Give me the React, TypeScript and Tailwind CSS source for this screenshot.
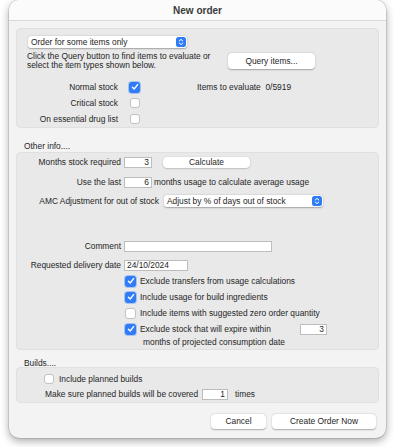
import React from "react";

const FONT = { fontFamily: '"Liberation Sans", Arial, sans-serif' };

function Stepper() {
  return (
    <svg width="10" height="10" viewBox="0 0 10 10" className="shrink-0">
      <rect x="0" y="0" width="10" height="10" rx="2.5" fill="#2f7cf6" />
      <path d="M3.2 4 L5 2.4 L6.8 4" stroke="#fff" strokeWidth="1" fill="none" strokeLinecap="round" strokeLinejoin="round" />
      <path d="M3.2 6 L5 7.6 L6.8 6" stroke="#fff" strokeWidth="1" fill="none" strokeLinecap="round" strokeLinejoin="round" />
    </svg>
  );
}

function Check({ on, size = 11 }: { on: boolean; size?: number }) {
  if (on) {
    return (
      <span
        className="flex shrink-0 items-center justify-center rounded-[3px] bg-[#2f7cf6] shadow-[0_0_0_1px_rgba(47,124,246,0.35)]"
        style={{ width: size, height: size }}
      >
        <svg width="8" height="8" viewBox="0 0 8 8">
          <path d="M1.4 4.2 L3.2 6 L6.6 1.6" stroke="#fff" strokeWidth="1.4" fill="none" strokeLinecap="round" strokeLinejoin="round" />
        </svg>
      </span>
    );
  }
  return (
    <span
      className="block shrink-0 rounded-[3px] border border-[#c2c2c2] bg-white"
      style={{ width: size, height: size }}
    />
  );
}

function Field({ w, value, align = "right" }: { w: string; value?: string; align?: "left" | "right" }) {
  return (
    <div
      className={`${w} flex h-[11px] shrink-0 items-center border border-[#bdbdbd] bg-white px-[2px] text-[8.4px] leading-none ${
        align === "right" ? "justify-end" : "justify-start"
      }`}
    >
      {value}
    </div>
  );
}

function PopUp({ w, label }: { w: string; label: string }) {
  return (
    <div
      className={`${w} flex h-[12px] shrink-0 items-center justify-between rounded-[3px] bg-white pl-[3px] pr-[1px] shadow-[0_0.5px_1.5px_rgba(0,0,0,0.3)]`}
    >
      <span className="text-[8.4px] leading-none">{label}</span>
      <Stepper />
    </div>
  );
}

function PushButton({ w, h, label }: { w: string; h: string; label: string }) {
  return (
    <div
      className={`${w} ${h} flex shrink-0 items-center justify-center rounded-[4px] bg-white text-[8.4px] leading-none shadow-[0_0.5px_1.5px_rgba(0,0,0,0.3)]`}
    >
      {label}
    </div>
  );
}

export default function App() {
  return (
    <div className="h-[447px] w-[394px] bg-white text-[8.4px] text-[#262626]" style={FONT}>
      <div className="ml-[9px] flex h-[438px] w-[377px] flex-col overflow-hidden rounded-[10px] bg-[#f3f3f3] shadow-[0_3px_8px_rgba(0,0,0,0.35),0_0_0_0.5px_rgba(0,0,0,0.2)]">
        {/* title bar */}
        <div className="flex h-[21px] shrink-0 items-center justify-center border-b border-[#d8d8d8] bg-[#fbfbfb] text-[10px] font-bold text-[#3a3a3a]">
          New order
        </div>

        <div className="flex flex-col px-[7px]">
          {/* item selection */}
          <div className="mt-[7px] flex h-[100px] flex-col rounded-[4px] border border-[#e0e0e0] bg-[#e9e9e9]">
            <div className="ml-[11px] mt-[7px]">
              <PopUp w="w-[159px]" label="Order for some items only" />
            </div>
            <div className="mt-[4px] flex h-[18px] items-center">
              <div className="ml-[10px] w-[201px] leading-[9px]">
                Click the Query button to find items to evaluate or
                <br />
                select the item types shown below.
              </div>
              <PushButton w="w-[87px]" h="h-[16px]" label="Query items..." />
            </div>
            <div className="mt-[9px] flex h-[16px] items-center">
              <span className="w-[101px] text-right">Normal stock</span>
              <span className="ml-[11px]">
                <Check on />
              </span>
              <span className="ml-[57px]">Items to evaluate&nbsp; 0/5919</span>
            </div>
            <div className="flex h-[16px] items-center">
              <span className="w-[101px] text-right">Critical stock</span>
              <span className="ml-[12px]">
                <Check on={false} size={10} />
              </span>
            </div>
            <div className="flex h-[16px] items-center">
              <span className="w-[101px] text-right">On essential drug list</span>
              <span className="ml-[12px]">
                <Check on={false} size={10} />
              </span>
            </div>
          </div>

          <div className="ml-[8px] mt-[13px] h-[10px] leading-[10px]">Other info....</div>

          {/* other info */}
          <div className="mt-[1px] flex h-[198px] flex-col rounded-[4px] border border-[#e0e0e0] bg-[#e9e9e9]">
            <div className="mt-[3px] flex h-[12px] items-center">
              <span className="w-[104px] text-right">Months stock required</span>
              <span className="ml-[3px]">
                <Field w="w-[28px]" value="3" />
              </span>
              <span className="ml-[11px]">
                <PushButton w="w-[87px]" h="h-[11px]" label="Calculate" />
              </span>
            </div>
            <div className="mt-[8px] flex h-[12px] items-center">
              <span className="w-[104px] text-right">Use the last</span>
              <span className="ml-[3px]">
                <Field w="w-[28px]" value="6" />
              </span>
              <span className="ml-[2px]">months usage to calculate average usage</span>
            </div>
            <div className="mt-[7px] flex h-[12px] items-center">
              <span className="w-[142px] text-right">AMC Adjustment for out of stock</span>
              <span className="ml-[5px]">
                <PopUp w="w-[159px]" label="Adjust by % of days out of stock" />
              </span>
            </div>
            <div className="mt-[33px] flex h-[12px] items-center">
              <span className="w-[104px] text-right">Comment</span>
              <span className="ml-[3px]">
                <Field w="w-[148px]" />
              </span>
            </div>
            <div className="mt-[7px] flex h-[12px] items-center">
              <span className="w-[104px] text-right">Requested delivery date</span>
              <span className="ml-[3px]">
                <Field w="w-[64px]" value="24/10/2024" align="left" />
              </span>
            </div>
            <div className="mt-[2px] flex flex-col">
              {[
                { on: true, text: "Exclude transfers from usage calculations" },
                { on: true, text: "Include usage for build ingredients" },
                { on: false, text: "Include items with suggested zero order quantity" },
              ].map((row) => (
                <div key={row.text} className="flex h-[16px] items-center">
                  <span className="ml-[108px]">
                    <Check on={row.on} />
                  </span>
                  <span className="ml-[4px]">{row.text}</span>
                </div>
              ))}
              <div className="flex h-[16px] items-center">
                <span className="ml-[108px]">
                  <Check on />
                </span>
                <span className="ml-[4px] w-[160px]">Exclude stock that will expire within</span>
                <Field w="w-[27px]" value="3" />
              </div>
            </div>
            <div className="ml-[126px] h-[10px] leading-[10px]">months of projected consumption date</div>
          </div>

          <div className="ml-[8px] mt-[9px] h-[8px] leading-[8px]">Builds....</div>

          {/* builds */}
          <div className="flex h-[36px] flex-col rounded-[4px] border border-[#e0e0e0] bg-[#e9e9e9]">
            <div className="mt-[5px] flex h-[12px] items-center">
              <span className="ml-[27px]">
                <Check on={false} size={10} />
              </span>
              <span className="ml-[5px]">Include planned builds</span>
            </div>
            <div className="mt-[3px] flex h-[12px] items-center">
              <span className="ml-[28px] w-[157px]">Make sure planned builds will be covered</span>
              <Field w="w-[26px]" value="1" />
              <span className="ml-[7px]">times</span>
            </div>
          </div>

          {/* actions */}
          <div className="mt-[11px] flex justify-end gap-[6px] pr-[3px]">
            <PushButton w="w-[55px]" h="h-[15px]" label="Cancel" />
            <PushButton w="w-[104px]" h="h-[15px]" label="Create Order Now" />
          </div>
        </div>
      </div>
    </div>
  );
}
